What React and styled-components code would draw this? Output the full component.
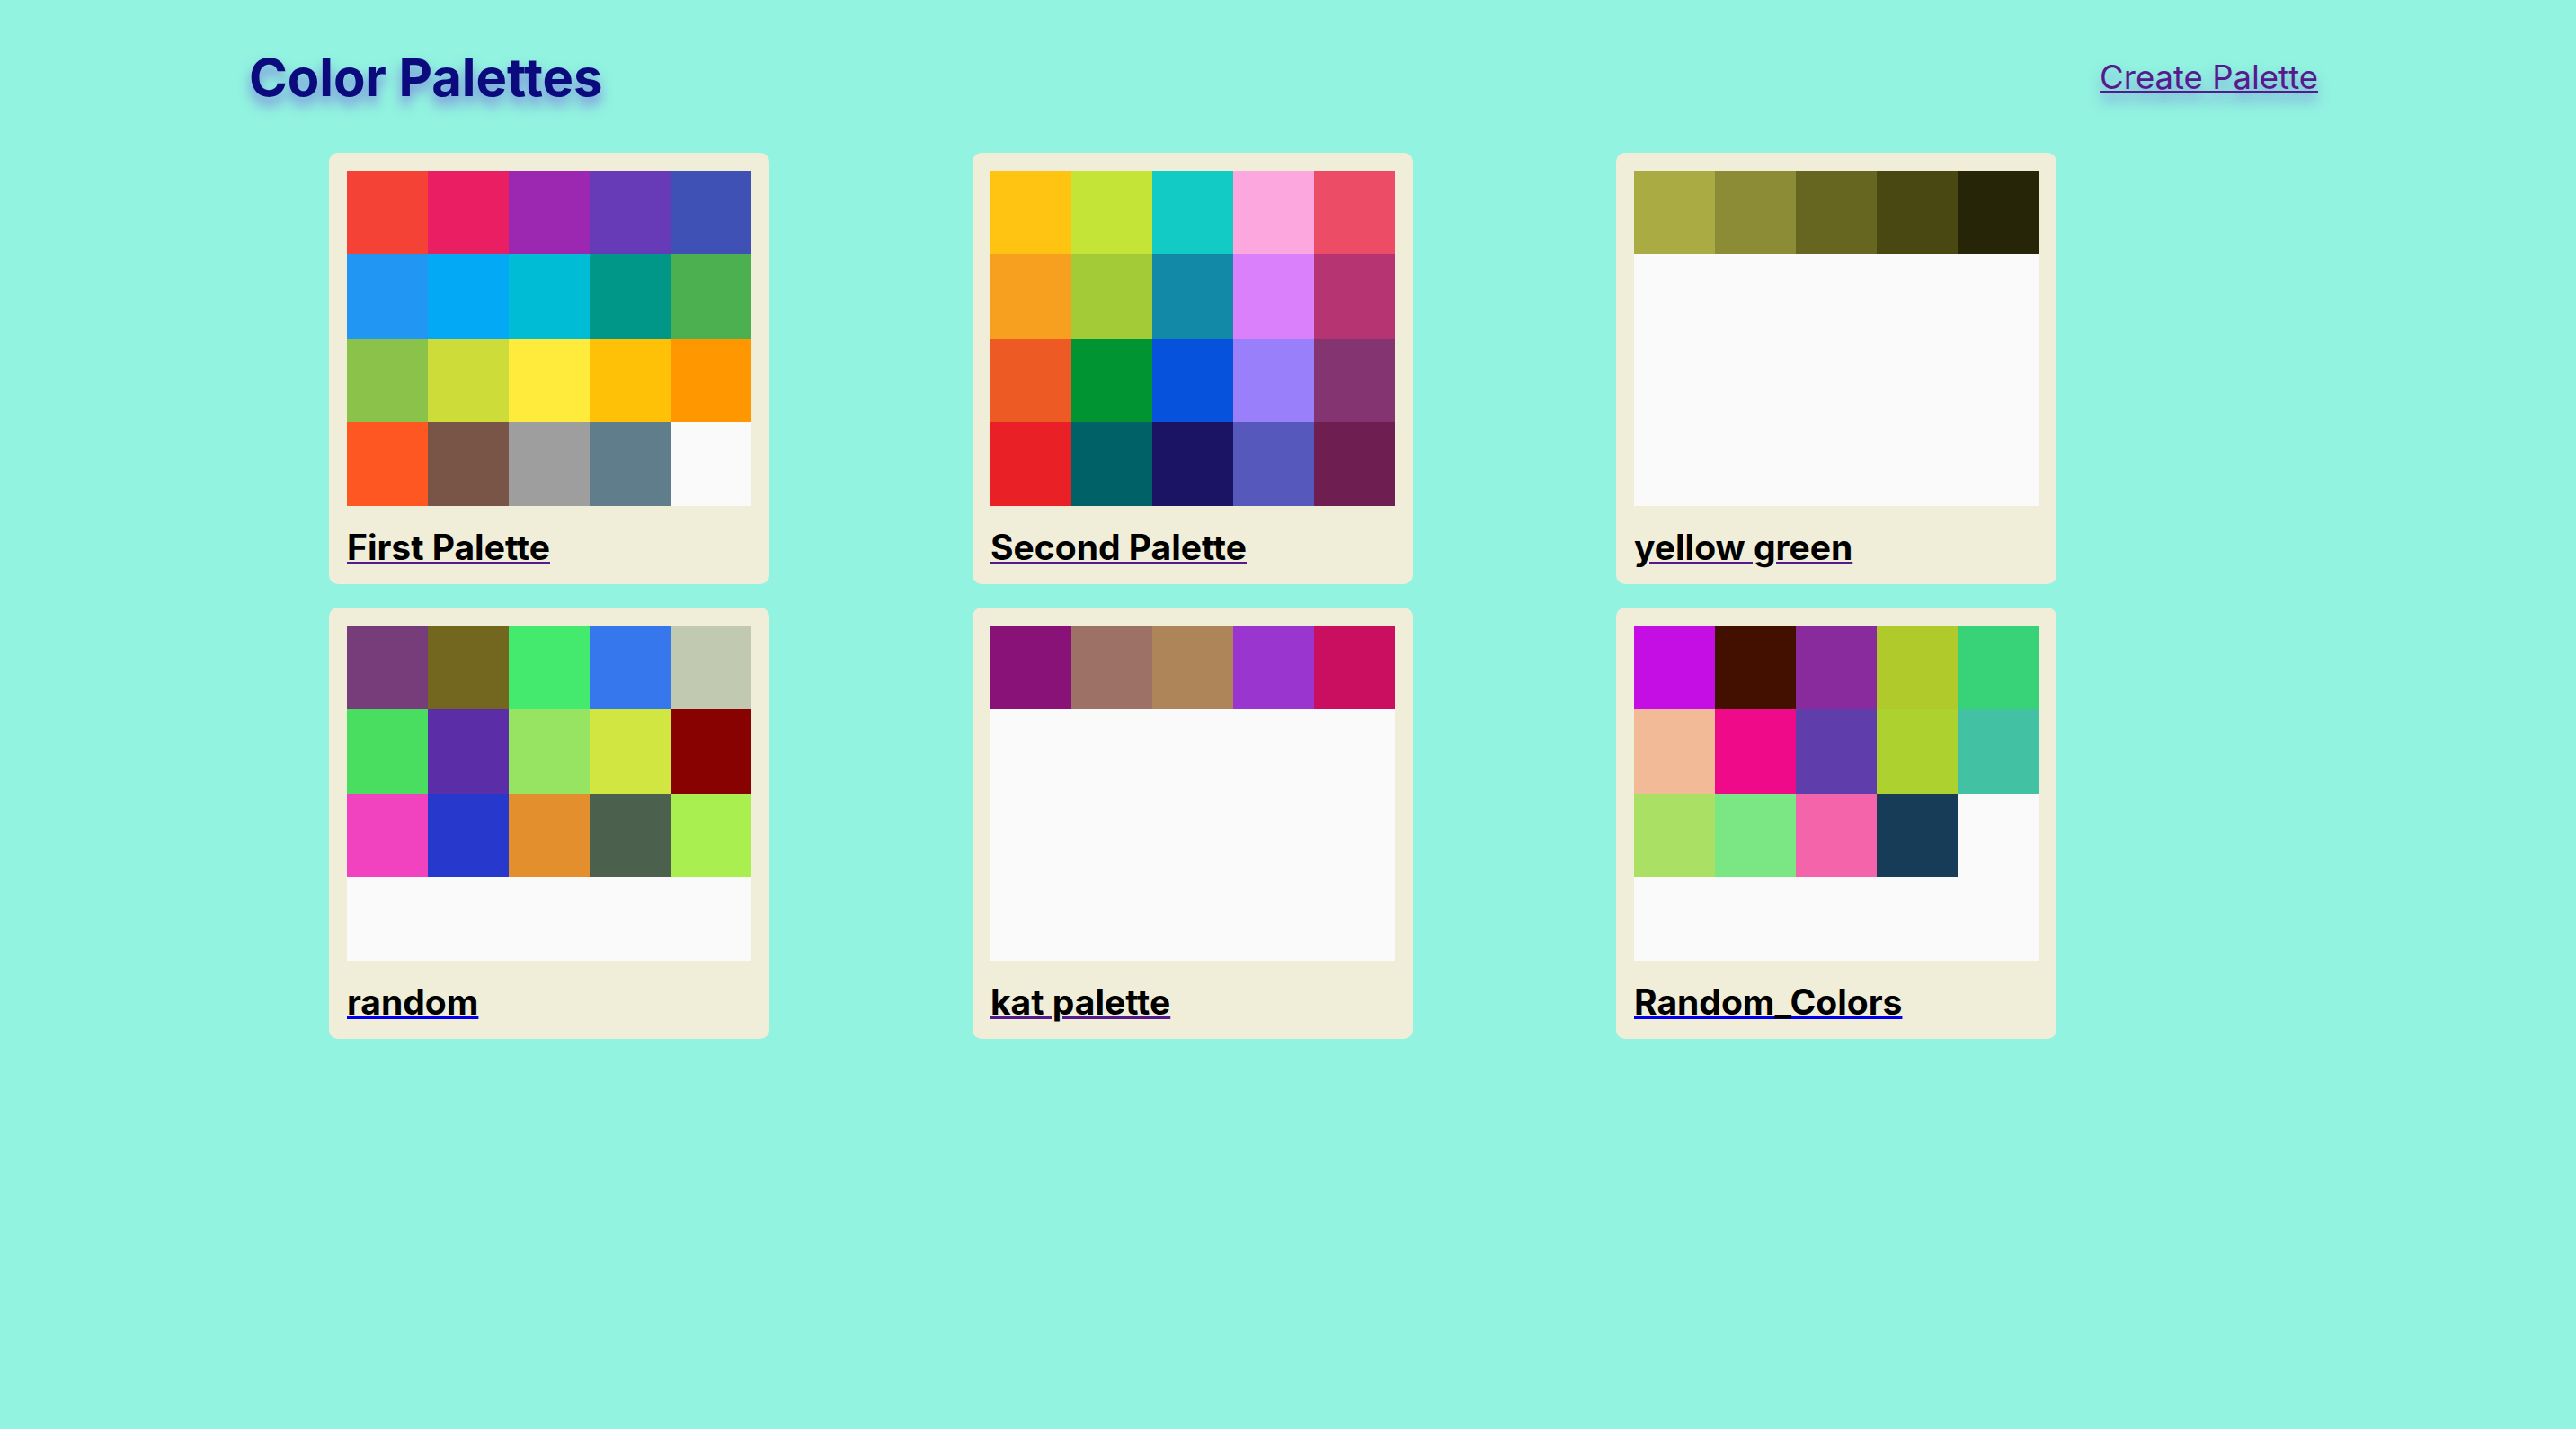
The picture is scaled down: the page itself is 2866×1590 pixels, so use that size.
import React from "react";
import styled, { createGlobalStyle } from "styled-components";

const palettes = [
  {
    name: "First Palette",
    visited: true,
    colors: [
      "#f44336", "#e91e63", "#9c27b0", "#673ab7", "#3f51b5",
      "#2196f3", "#03a9f4", "#00bcd4", "#009688", "#4caf50",
      "#8bc34a", "#cddc39", "#ffeb3b", "#ffc107", "#ff9800",
      "#ff5722", "#795548", "#9e9e9e", "#607d8b",
    ],
  },
  {
    name: "Second Palette",
    visited: true,
    colors: [
      "#ffc312", "#c4e538", "#12cbc4", "#fda7df", "#ed4c67",
      "#f79f1f", "#a3cb38", "#1289a7", "#d980fa", "#b53471",
      "#ee5a24", "#009432", "#0652dd", "#9980fa", "#833471",
      "#ea2027", "#006266", "#1b1464", "#5758bb", "#6f1e51",
    ],
  },
  {
    name: "yellow green",
    visited: true,
    colors: ["#abab43", "#8c8b36", "#676621", "#494712", "#272507"],
  },
  {
    name: "random",
    visited: false,
    colors: [
      "#773d7b", "#736720", "#43ea6d", "#3677ed", "#c1cab0",
      "#4ade60", "#5b2da6", "#97e462", "#d1e640", "#880202",
      "#f143bf", "#2639cc", "#e48f2e", "#4b614d", "#a9ef4f",
    ],
  },
  {
    name: "kat palette",
    visited: true,
    colors: ["#881277", "#9d7166", "#ae8459", "#9a35cf", "#cb0f60"],
  },
  {
    name: "Random_Colors",
    visited: false,
    colors: [
      "#c40ee4", "#431000", "#892b9d", "#b1ca2b", "#38d378",
      "#f2ba96", "#ee0a88", "#5f3eab", "#add12f", "#42c2a2",
      "#aae064", "#7ae684", "#f464aa", "#173c57",
    ],
  },
];

const GlobalStyle = createGlobalStyle`
  html, body {
    margin: 0;
    min-height: 100%;
    background: #92f3e0;
  }
  body {
    font-family: Inter, "Noto Sans", sans-serif;
  }
`;

const Page = styled.div`
  min-height: 100vh;
  background: #92f3e0;
`;

const Nav = styled.nav`
  display: flex;
  justify-content: space-between;
  align-items: center;
  height: 92px;
  padding: 40px 287px 38px 277px;
`;

const Heading = styled.h1`
  margin: 0;
  font-size: 58px;
  font-weight: 700;
  letter-spacing: -0.1px;
  color: #0b0b7e;
  text-shadow: 0 9px 14px rgba(110, 80, 220, 0.65);
`;

const CreateLink = styled.a`
  font-size: 36.5px;
  color: #551a8b;
  text-decoration: underline;
  text-decoration-thickness: 3px;
  text-shadow: 0 9px 14px rgba(110, 80, 220, 0.55);
  cursor: pointer;
`;

const Grid = styled.div`
  display: grid;
  grid-template-columns: repeat(3, 490px);
  column-gap: 226px;
  row-gap: 26px;
  padding-left: 366px;
`;

const Card = styled.div`
  background: #f0edd9;
  border-radius: 10px;
  padding: 20px 20px 18px;
`;

const Swatches = styled.div`
  display: flex;
  flex-wrap: wrap;
  align-content: flex-start;
  height: 373px;
  background: #fafafa;
`;

const Swatch = styled.div`
  width: 20%;
  height: 25%;
  background: ${({ $color }) => $color};
`;

const TitleLink = styled.a`
  display: inline-block;
  margin-top: 23px;
  color: ${({ $visited }) => ($visited ? "#551a8b" : "#0000ee")};
  text-decoration: underline;
  text-decoration-thickness: 3px;
  cursor: pointer;
`;

const Title = styled.span`
  font-size: 39px;
  font-weight: 700;
  line-height: 46px;
  color: #000;
`;

const PaletteCard = ({ palette }) => (
  <Card>
    <Swatches>
      {palette.colors.map((c, i) => (
        <Swatch key={i} $color={c} />
      ))}
    </Swatches>
    <TitleLink $visited={palette.visited}>
      <Title>{palette.name}</Title>
    </TitleLink>
  </Card>
);

export default function App() {
  return (
    <Page>
      <GlobalStyle />
      <Nav>
        <Heading>Color Palettes</Heading>
        <CreateLink>Create Palette</CreateLink>
      </Nav>
      <Grid>
        {palettes.map((p) => (
          <PaletteCard key={p.name} palette={p} />
        ))}
      </Grid>
    </Page>
  );
}
